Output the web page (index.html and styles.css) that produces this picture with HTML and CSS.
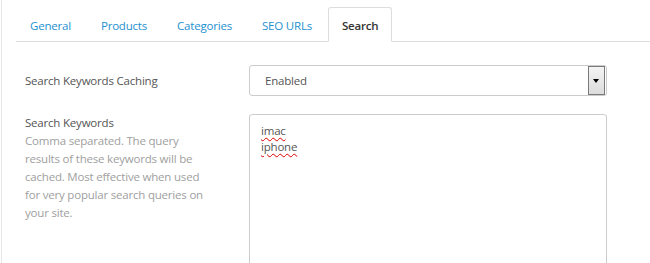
FILE: index.html
```html
<!DOCTYPE html>
<html lang="en">
<head>
  <meta charset="UTF-8" />
  <title>Settings — Search</title>
  <link rel="stylesheet" href="styles.css">
</head>
<body>
  <div class="panel">
    <ul class="nav-tabs">
      <li><a href="#">General</a></li>
      <li><a href="#">Products</a></li>
      <li><a href="#">Categories</a></li>
      <li><a href="#">SEO URLs</a></li>
      <li class="active"><a href="#">Search</a></li>
    </ul>

    <form class="tab-content">
      <div class="form-row row-center">
        <label class="form-label">Search Keywords Caching</label>
        <div class="form-control select">
          <span class="select-value">Enabled</span>
          <span class="select-arrow"></span>
        </div>
      </div>

      <div class="form-row">
        <div class="form-label">
          <label>Search Keywords</label>
          <p class="help">Comma separated. The query results of these keywords will be cached. Most effective when used for very popular search queries on your site.</p>
        </div>
        <div class="form-control textarea">
          <div><span class="typo">imac</span></div>
          <div><span class="typo">iphone</span></div>
        </div>
      </div>
    </form>
  </div>
</body>
</html>
```

FILE: styles.css
```css
:root {
  --blue: #1e91cf;
  --border: #dddddd;
  --input: #cccccc;
  --text: #555555;
  --muted: #a0a0a0;
}

* {
  box-sizing: border-box;
  margin: 0;
  padding: 0;
}

html, body {
  background: #ffffff;
  font-family: 'Open Sans', sans-serif;
  font-size: 11.5px;
  letter-spacing: -0.2px;
  color: var(--text);
  overflow: hidden;
}

.panel {
  margin-left: 1px;
  border-left: 1px solid #e6e6e6;
  padding: 7px 0 0 14px;
  height: 263px;
}

.nav-tabs {
  display: flex;
  list-style: none;
  border-bottom: 1px solid var(--border);
}

.nav-tabs li {
  margin-right: 2px;
  margin-bottom: -1px;
}

.nav-tabs a {
  display: block;
  padding: 9px 13px 7px;
  line-height: 17px;
  border: 1px solid transparent;
  border-radius: 3px 3px 0 0;
  color: var(--blue);
  text-decoration: none;
}

.nav-tabs .active a {
  border-color: var(--border);
  border-bottom-color: #ffffff;
  background: #ffffff;
  color: #333333;
  font-weight: 600;
}

.tab-content {
  padding: 23px 0 0 9px;
}

.form-row {
  display: flex;
  margin-bottom: 18px;
}

.row-center {
  align-items: center;
}

.form-label {
  width: 224px;
  line-height: 18px;
  color: var(--text);
}

.help {
  width: 184px;
  color: var(--muted);
  line-height: 18px;
}

.form-control {
  width: 358px;
  border: 1px solid var(--input);
  border-radius: 3px;
  background: #ffffff;
}

.select {
  position: relative;
  height: 31px;
  padding-left: 15px;
  line-height: 29px;
}

.select-arrow {
  position: absolute;
  top: 0;
  right: 1px;
  width: 17px;
  height: 29px;
  border: 1px solid #7a7a7a;
  background: linear-gradient(#f4f4f4, #dcdcdc);
}

.select-arrow::after {
  content: "";
  position: absolute;
  left: 4px;
  top: 12px;
  border-left: 3.5px solid transparent;
  border-right: 3.5px solid transparent;
  border-top: 4px solid #000000;
}

.textarea {
  height: 170px;
  padding: 8px 11px;
  line-height: 16px;
}

.typo {
  text-decoration: underline wavy #e00000;
  text-decoration-thickness: 1px;
  text-underline-offset: 2px;
}
```
